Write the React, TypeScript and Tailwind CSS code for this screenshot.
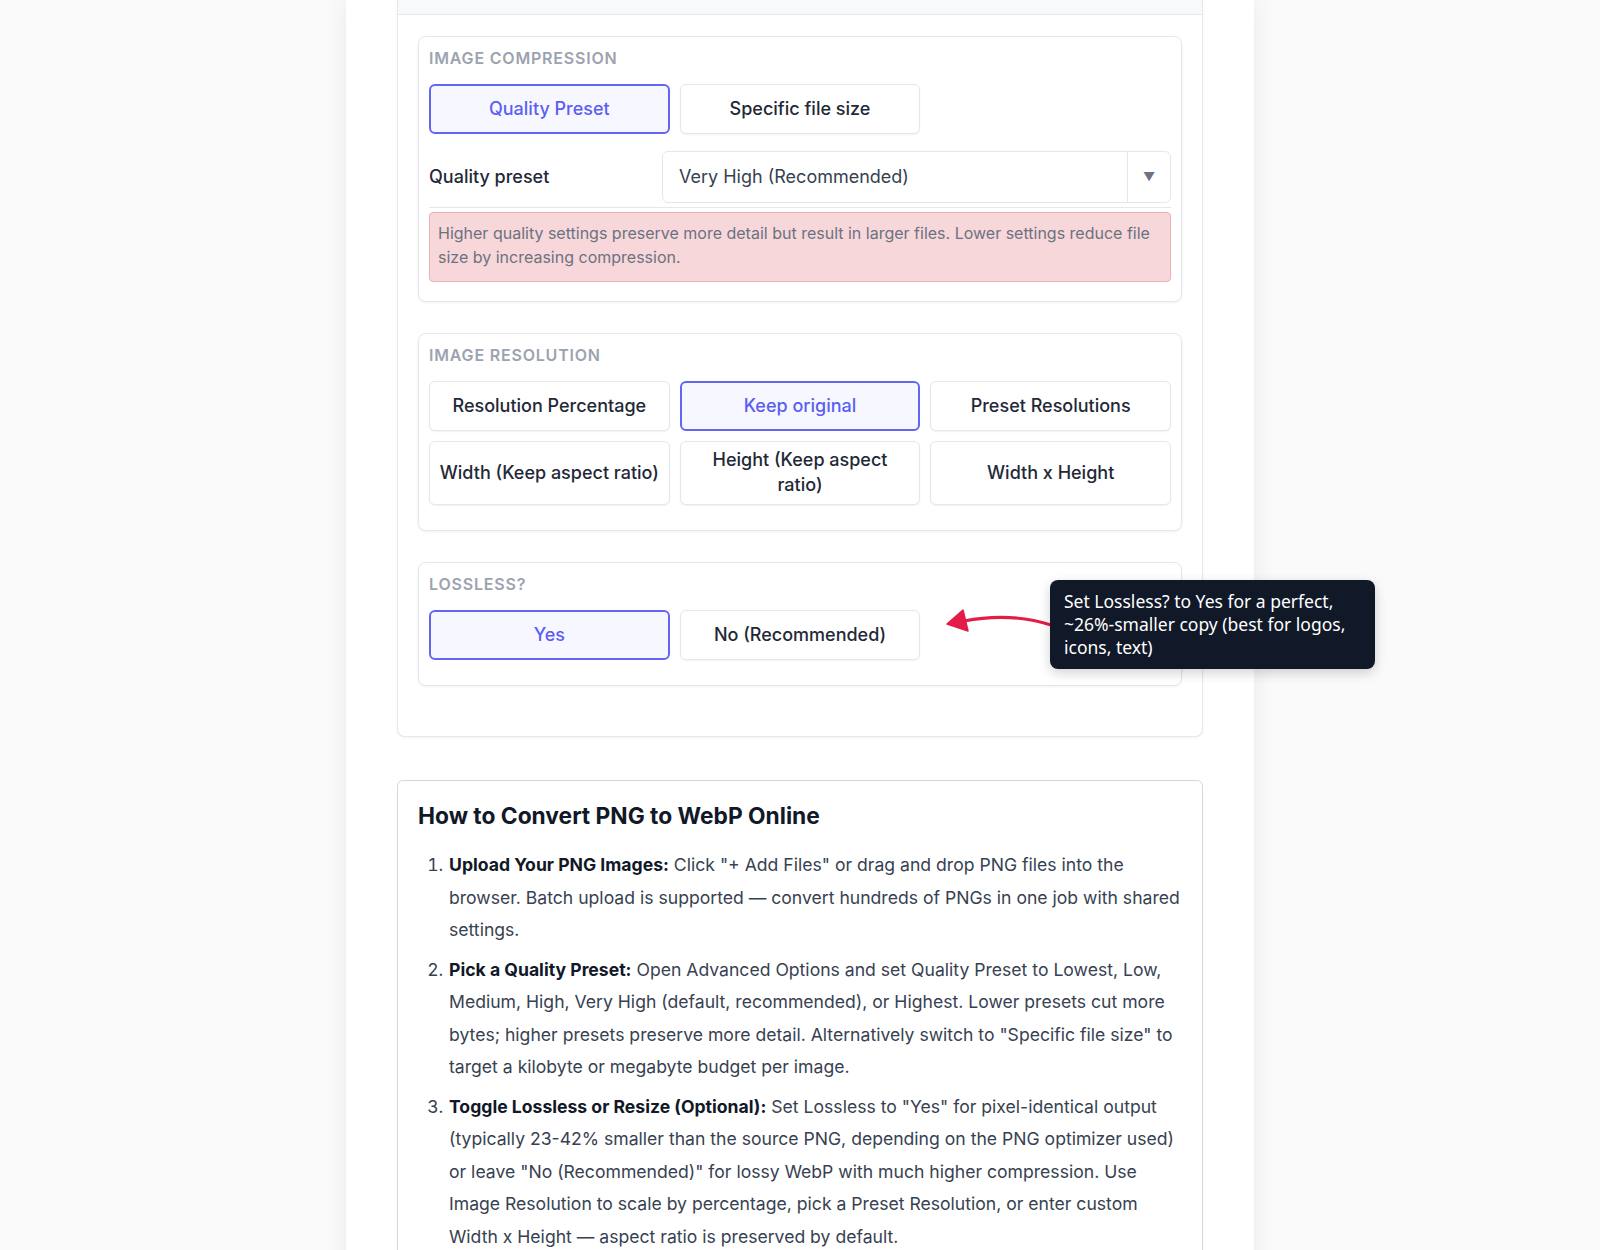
import React from "react";

function OptBtn({ label, active }: { label: React.ReactNode; active?: boolean }) {
  return (
    <div
      className={
        active
          ? "min-h-[50px] px-2 pt-[5px] pb-[7px] flex items-center justify-center text-center rounded-md border-2 border-[#6366f1] bg-[#f7f8ff] text-[#5b5ef2] text-[18px] leading-[25px] font-medium"
          : "min-h-[50px] px-2 pt-[5px] pb-[7px] flex items-center justify-center text-center rounded-md border border-[#e5e7eb] bg-white text-[#1f2937] text-[18px] leading-[25px] font-medium shadow-[0_1px_2px_rgba(0,0,0,0.06)]"
      }
    >
      <span>{label}</span>
    </div>
  );
}

function SectionLabel({ children }: { children: React.ReactNode }) {
  return (
    <div className="text-[16px] leading-[22px] font-semibold uppercase tracking-wider text-[#9ca3af] mb-[15px]">
      {children}
    </div>
  );
}

export default function App() {
  return (
    <div className="relative min-h-screen bg-[#fafafa] font-['Inter',sans-serif]">
      <div className="mx-auto w-[908px] bg-white shadow-[0_0_24px_rgba(0,0,0,0.07)] px-[51px] pb-16">
        {/* Card 1 */}
        <div className="border border-t-0 border-[#e5e7eb] rounded-b-lg bg-white shadow-[0_1px_3px_rgba(0,0,0,0.05)]">
          <div className="h-[15px] bg-[#f8f9fa] border-b border-[#e5e7eb]" />
          <div className="px-5 pt-[21px] pb-[50px] flex flex-col gap-[31px]">
            {/* Image compression */}
            <div className="border border-[#e5e7eb] rounded-lg bg-white shadow-[0_1px_3px_rgba(0,0,0,0.06)] px-[10px] pt-[10px] pb-[19px]">
              <SectionLabel>Image Compression</SectionLabel>
              <div className="grid grid-cols-3 gap-[10px]">
                <OptBtn label="Quality Preset" active />
                <OptBtn label="Specific file size" />
              </div>
              <div className="mt-[17px] flex items-center pb-1 border-b border-[#e5e7eb]">
                <div className="w-[233px] pb-[2px] text-[18px] font-medium text-[#1f2937]">Quality preset</div>
                <div className="flex-1 h-[52px] flex border border-[#e5e7eb] rounded-md bg-white">
                  <div className="flex-1 flex items-center pl-4 pb-[2px] text-[18px] text-[#374151]">
                    Very High (Recommended)
                  </div>
                  <div className="w-[43px] border-l border-[#e5e7eb] flex items-center justify-center text-[12px] text-[#6b7280]">
                    ▼
                  </div>
                </div>
              </div>
              <div className="mt-[4px] rounded-[4px] border border-[#f1aeb5] bg-[#f8d7da] px-2 pt-[8px] pb-[12px] text-[16px] leading-[24px] text-[#6b7280]">
                Higher quality settings preserve more detail but result in larger files. Lower settings reduce file size by
                increasing compression.
              </div>
            </div>

            {/* Image resolution */}
            <div className="border border-[#e5e7eb] rounded-lg bg-white shadow-[0_1px_3px_rgba(0,0,0,0.06)] px-[10px] pt-[10px] pb-[19px]">
              <SectionLabel>Image Resolution</SectionLabel>
              <div className="grid grid-cols-3 gap-[10px] mb-[6px]">
                <OptBtn label="Resolution Percentage" />
                <OptBtn label="Keep original" active />
                <OptBtn label="Preset Resolutions" />
                <OptBtn label="Width (Keep aspect ratio)" />
                <OptBtn
                  label={
                    <>
                      Height (Keep aspect
                      <br />
                      ratio)
                    </>
                  }
                />
                <OptBtn label="Width x Height" />
              </div>
            </div>

            {/* Lossless */}
            <div className="border border-[#e5e7eb] rounded-lg bg-white shadow-[0_1px_3px_rgba(0,0,0,0.06)] px-[10px] pt-[10px] pb-[19px]">
              <SectionLabel>Lossless?</SectionLabel>
              <div className="grid grid-cols-3 gap-[10px] mb-[6px]">
                <OptBtn label="Yes" active />
                <OptBtn label="No (Recommended)" />
              </div>
            </div>
          </div>
        </div>

        {/* Card 2 */}
        <div className="mt-[43px] border border-[#d4d7dc] rounded-md bg-white px-5 pt-[19px] pb-6">
          <h2 className="text-[22.75px] leading-[32px] font-bold text-[#111827] mb-[17px]">
            How to Convert PNG to WebP Online
          </h2>
          <ol className="list-decimal pl-[30px] text-[17.6px] leading-[32.5px] text-[#374151]">
            <li className="mb-[7px] pl-[1px]">
              <strong className="font-bold text-[#111827]">Upload Your PNG Images:</strong> Click "+ Add Files" or drag and
              drop PNG files into the browser. Batch upload is supported — convert hundreds of PNGs in one job with shared
              settings.
            </li>
            <li className="mb-[7px] pl-[1px]">
              <strong className="font-bold text-[#111827]">Pick a Quality Preset:</strong> Open Advanced Options and set
              Quality Preset to Lowest, Low, Medium, High, Very High (default, recommended), or Highest. Lower presets cut
              more bytes; higher presets preserve more detail. Alternatively switch to "Specific file size" to target a
              kilobyte or megabyte budget per image.
            </li>
            <li className="mb-[7px] pl-[1px]">
              <strong className="font-bold text-[#111827]">Toggle Lossless or Resize (Optional):</strong> Set Lossless to
              "Yes" for pixel-identical output (typically 23-42% smaller than the source PNG, depending on the PNG optimizer
              used) or leave "No (Recommended)" for lossy WebP with much higher compression. Use Image Resolution to scale by
              percentage, pick a Preset Resolution, or enter custom Width x Height — aspect ratio is preserved by default.
            </li>
            <li className="mb-[7px] pl-[1px]">
              <strong className="font-bold text-[#111827]">Convert and Download:</strong> Click "Convert" and download your
              WebP files individually or as a ZIP archive.
            </li>
          </ol>
        </div>
      </div>

      {/* Annotation arrow */}
      <svg
        className="absolute left-[940px] top-[600px]"
        width="115"
        height="40"
        viewBox="0 0 115 40"
        fill="none"
      >
        <path d="M111 25 Q 70 12 24 21" stroke="#e11d48" strokeWidth="3.2" strokeLinecap="round" fill="none" />
        <path d="M7 24 L23 10 L28 31 Z" fill="#e11d48" stroke="#e11d48" strokeWidth="1.5" strokeLinejoin="round" />
      </svg>

      {/* Tooltip */}
      <div className="absolute left-[1050px] top-[580px] w-[325px] rounded-lg bg-[#111827] px-[14px] py-[10px] text-[17.5px] leading-[23px] text-white font-['Noto_Sans',sans-serif] shadow-[0_4px_12px_rgba(0,0,0,0.18)]">
        Set Lossless? to Yes for a perfect,
        <br />
        ~26%-smaller copy (best for logos,
        <br />
        icons, text)
      </div>
    </div>
  );
}
